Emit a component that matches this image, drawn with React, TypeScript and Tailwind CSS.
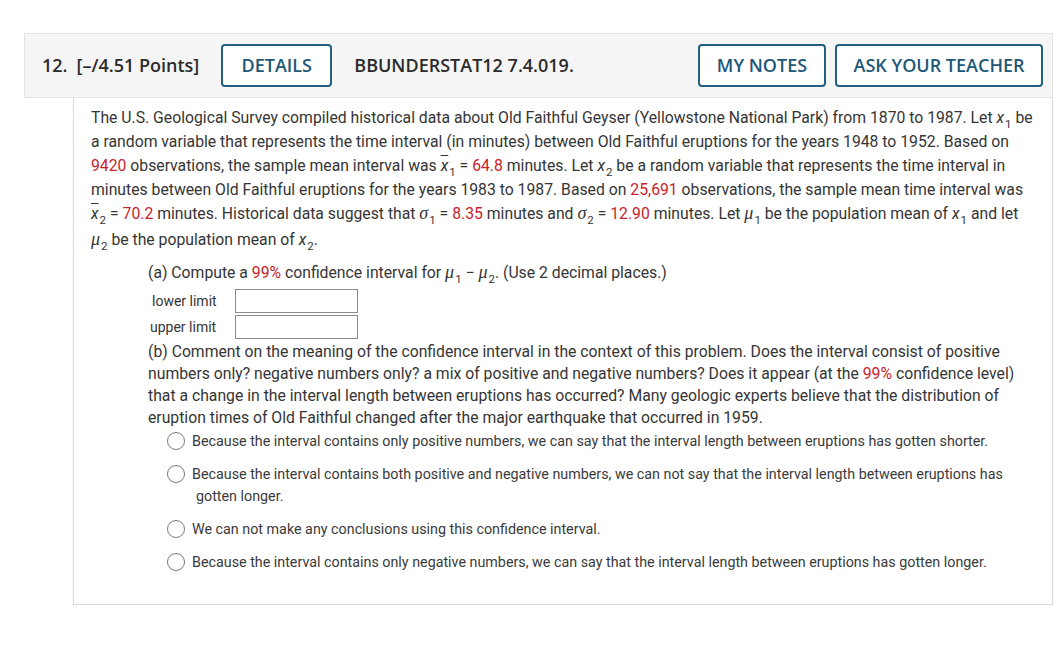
import React from "react";

const Red = ({ children }: { children: React.ReactNode }) => (
  <span className="text-[#c8232a]">{children}</span>
);

const Sub = ({ children }: { children: React.ReactNode }) => (
  <span className="relative top-[5px] ml-[1px] text-[11.5px] leading-[0] not-italic [font-family:Roboto,sans-serif]">{children}</span>
);

const X = ({ n, bar }: { n: string; bar?: boolean }) => (
  <span className="whitespace-nowrap">
    <span className={"italic" + (bar ? " overline" : "")}>x</span>
    <Sub>{n}</Sub>
  </span>
);

const Sigma = ({ n }: { n: string }) => (
  <span className="whitespace-nowrap">
    <span className="italic leading-[0] [font-family:'Liberation_Serif',serif] text-[18px]">σ</span>
    <Sub>{n}</Sub>
  </span>
);

const Mu = ({ n }: { n: string }) => (
  <span className="whitespace-nowrap">
    <span className="italic leading-[0] [font-family:'Liberation_Serif',serif] text-[18px]">μ</span>
    <Sub>{n}</Sub>
  </span>
);

const Radio = ({ children }: { children: React.ReactNode }) => (
  <div className="flex items-start">
    <span className="mt-[2px] h-[18px] w-[18px] shrink-0 rounded-full border border-[#7a7a7a] bg-white" />
    <div className="ml-[7px] leading-[22px]">{children}</div>
  </div>
);

const Btn = ({ children, w }: { children: React.ReactNode; w: string }) => (
  <div
    className={
      "flex h-[43px] items-center justify-center rounded-[4px] border-2 border-[#22607f] bg-white text-[18px] font-semibold text-[#1d5878] " +
      w
    }
  >
    {children}
  </div>
);

export default function App() {
  return (
    <div className="min-h-[653px] w-[1063px] bg-white pt-[33px] [font-family:Roboto,sans-serif] text-[#353535]">
      {/* Header */}
      <div className="ml-[24px] flex h-[65px] w-[1029px] items-center border border-[#e4e4e4] bg-[#f5f5f5] pl-[17px] pr-[9px] [font-family:'Open_Sans',sans-serif] text-[18px] font-semibold text-[#2b2b2b]">
        <span>12.</span>
        <span className="ml-[9px]">[–/4.51 Points]</span>
        <div className="ml-[22px]">
          <Btn w="w-[111px]">DETAILS</Btn>
        </div>
        <span className="ml-[22px]">BBUNDERSTAT12 7.4.019.</span>
        <div className="ml-auto flex gap-[9px]">
          <Btn w="w-[128px]">MY NOTES</Btn>
          <Btn w="w-[208px]">ASK YOUR TEACHER</Btn>
        </div>
      </div>

      {/* Body */}
      <div className="ml-[73px] w-[980px] border-x border-b border-[#dadada] pb-[31px] pl-[17px] pt-[8px] text-[15.75px]">
        <div className="leading-[24px]">
          <div>
            The U.S. Geological Survey compiled historical data about Old Faithful Geyser (Yellowstone National Park) from 1870 to 1987. Let <X n="1" /> be
          </div>
          <div>
            a random variable that represents the time interval (in minutes) between Old Faithful eruptions for the years 1948 to 1952. Based on
          </div>
          <div>
            <Red>9420</Red> observations, the sample mean interval was <X n="1" bar /> = <Red>64.8</Red> minutes. Let <X n="2" /> be a random variable that represents the time interval in
          </div>
          <div>
            minutes between Old Faithful eruptions for the years 1983 to 1987. Based on <Red>25,691</Red> observations, the sample mean time interval was
          </div>
          <div>
            <X n="2" bar /> = <Red>70.2</Red> minutes. Historical data suggest that <Sigma n="1" /> = <Red>8.35</Red> minutes and <Sigma n="2" /> = <Red>12.90</Red> minutes. Let <Mu n="1" /> be the population mean of <X n="1" /> and let
          </div>
          <div className="mt-[2px]">
            <Mu n="2" /> be the population mean of <X n="2" />.
          </div>
        </div>

        <div className="ml-[57px] mt-[9px]">
          <div className="leading-[24px]">
            (a) Compute a <Red>99%</Red> confidence interval for <Mu n="1" /> − <Mu n="2" />. (Use 2 decimal places.)
          </div>
          <div className="mt-[4px] flex h-[24px] items-center text-[14px]">
            <span className="ml-[4px] w-[83px]">lower limit</span>
            <span className="h-[24px] w-[123px] border border-[#8a8a8a] bg-white" />
          </div>
          <div className="mt-[2px] flex h-[24px] items-center text-[14px]">
            <span className="ml-[2px] w-[85px]">upper limit</span>
            <span className="h-[24px] w-[123px] border border-[#8a8a8a] bg-white" />
          </div>
          <div className="mt-[2px] leading-[22px]">
            <div>
              (b) Comment on the meaning of the confidence interval in the context of this problem. Does the interval consist of positive
            </div>
            <div>
              numbers only? negative numbers only? a mix of positive and negative numbers? Does it appear (at the <Red>99%</Red> confidence level)
            </div>
            <div>
              that a change in the interval length between eruptions has occurred? Many geologic experts believe that the distribution of
            </div>
            <div>eruption times of Old Faithful changed after the major earthquake that occurred in 1959.</div>
          </div>

          <div className="ml-[19px] mt-[1px] flex flex-col gap-[11px] text-[14.3px] text-[#3a3a3a]">
            <Radio>
              Because the interval contains only positive numbers, we can say that the interval length between eruptions has gotten shorter.
            </Radio>
            <Radio>
              <div>
                Because the interval contains both positive and negative numbers, we can not say that the interval length between eruptions has
              </div>
              <div className="ml-[4px]">gotten longer.</div>
            </Radio>
            <Radio>We can not make any conclusions using this confidence interval.</Radio>
            <Radio>
              Because the interval contains only negative numbers, we can say that the interval length between eruptions has gotten longer.
            </Radio>
          </div>
        </div>
      </div>
    </div>
  );
}
